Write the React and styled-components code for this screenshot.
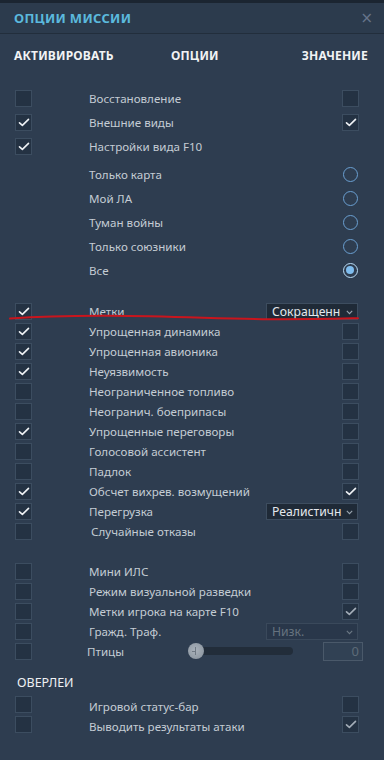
import React from 'react';
import styled, { createGlobalStyle } from 'styled-components';

const GlobalStyle = createGlobalStyle`
  html, body { margin: 0; padding: 0; background: #2e3d50; }
  body { font-family: "Noto Sans", "DejaVu Sans", sans-serif; }
  * { box-sizing: border-box; }
`;

const Window = styled.div`
  position: relative;
  width: 384px;
  height: 760px;
  background: #2e3d50;
  overflow: hidden;
`;

const TopStrip = styled.div`
  height: 3px;
  background: #1b2531;
`;

const TitleBar = styled.div`
  height: 31px;
  display: flex;
  align-items: center;
  justify-content: space-between;
  padding: 0 11px 0 14px;
  background: #2c3b4d;
  border-bottom: 1px solid #222e3c;
`;

const Title = styled.div`
  color: #5bb9dd;
  font-weight: 700;
  font-size: 13px;
  letter-spacing: 0.3px;
`;

const Close = styled.div`
  color: #66748a;
  font-size: 15px;
  line-height: 1;
  font-family: "DejaVu Sans", sans-serif;
`;

const HeaderRow = styled.div`
  display: grid;
  grid-template-columns: 157px 1fr auto;
  align-items: center;
  height: 43px;
  padding: 0 16px 0 14px;
  margin-bottom: 9px;
`;

const HeaderCell = styled.div`
  color: #f1f3f5;
  font-weight: 700;
  font-size: 12px;
  letter-spacing: 0.2px;
`;

const Section = styled.div`
  margin-top: ${p => p.$mt || 0}px;
`;

const Row = styled.div`
  display: grid;
  grid-template-columns: 74px 1fr auto;
  align-items: center;
  height: ${p => p.$h}px;
  padding: 0 25px 0 15px;
`;

const Label = styled.div`
  color: #c4ccd4;
  font-size: 11.6px;
  letter-spacing: 0;
  white-space: nowrap;
  margin-left: ${p => p.$shift || 0}px;
  padding-top: ${p => p.$drop || 0}px;
`;

const Box = styled.span`
  position: relative;
  display: flex;
  align-items: center;
  justify-content: center;
  width: 17px;
  height: 17px;
  background: #243243;
  border: 1px solid #3c4d60;
`;

const Check = ({ dim }) => (
  <svg width="12" height="9" viewBox="0 0 12 9">
    <path d="M1.5 4.8 L4.4 7.4 L10.5 1.4" fill="none" stroke={dim ? '#a3adb8' : '#eef1f4'} strokeWidth="1.6" strokeLinecap="round" strokeLinejoin="round" />
  </svg>
);

const CheckBox = ({ checked, dim }) => <Box>{checked && <Check dim={dim} />}</Box>;

const Radio = styled.span`
  position: relative;
  display: block;
  width: 15px;
  height: 15px;
  margin-right: 1px;
  border-radius: 50%;
  border: 1.4px solid ${p => (p.$on ? '#b9dcf6' : '#6a9fd1')};
  &::after {
    content: '';
    display: ${p => (p.$on ? 'block' : 'none')};
    position: absolute;
    left: 2px;
    top: 2px;
    width: 8.2px;
    height: 8.2px;
    border-radius: 50%;
    background: #7fbdee;
  }
`;

const Select = styled.div`
  position: relative;
  display: flex;
  align-items: center;
  width: 92px;
  height: 17px;
  margin-right: 1px;
  padding: 0 0 0 5px;
  background: ${p => (p.$disabled ? '#29374a' : '#1f2a37')};
  border: 1px solid ${p => (p.$disabled ? '#3a495b' : '#3d4d5f')};
  color: ${p => (p.$disabled ? '#66737f' : '#e4e8ec')};
  font-size: 12.2px;
  white-space: nowrap;
  overflow: hidden;
`;

const Chevron = styled.svg`
  position: absolute;
  right: 4px;
  top: 6px;
`;

const SelectBox = ({ text, disabled }) => (
  <Select $disabled={disabled}>
    {text}
    <Chevron width="7" height="5" viewBox="0 0 7 5">
      <path d="M0.8 0.8 L3.5 3.6 L6.2 0.8" fill="none" stroke={disabled ? '#6b7884' : '#9aa5b0'} strokeWidth="1.1" />
    </Chevron>
  </Select>
);

const SliderWrap = styled.div`
  display: flex;
  align-items: center;
  gap: 30px;
  margin-right: -4px;
`;

const Track = styled.div`
  position: relative;
  width: 104px;
  height: 8px;
  border-radius: 4px;
  background: #222d3a;
`;

const Thumb = styled.span`
  position: absolute;
  left: -1px;
  top: 50%;
  width: 16px;
  height: 16px;
  margin-top: -8px;
  border-radius: 50%;
  background: radial-gradient(circle at 45% 45%, #aab2bb 0%, #949ea8 60%, #838d97 100%);
  &::before {
    content: '';
    position: absolute;
    left: 7px;
    top: 4px;
    width: 1px;
    height: 8px;
    background: #6f7984;
  }
  &::after {
    content: '';
    position: absolute;
    left: 4px;
    top: 8px;
    width: 4px;
    height: 1px;
    background: #6f7984;
  }
`;

const NumberBox = styled.div`
  width: 40px;
  height: 19px;
  padding-right: 3px;
  text-align: right;
  line-height: 17px;
  font-size: 13px;
  color: #5d6b78;
  background: #314154;
  border: 1px solid #4a596a;
`;

const Slider = ({ value }) => (
  <SliderWrap>
    <Track><Thumb /></Track>
    <NumberBox>{value}</NumberBox>
  </SliderWrap>
);

const SubHeading = styled.div`
  color: #eef1f4;
  font-size: 12.5px;
  line-height: 16px;
  padding: 14px 0 0 17px;
  margin-bottom: 3px;
`;

const Annotation = styled.svg`
  position: absolute;
  left: 0;
  top: 0;
  pointer-events: none;
`;

const renderValue = v => {
  if (!v) return <span />;
  if (v.type === 'check') return <CheckBox checked={v.checked} dim={v.dim} />;
  if (v.type === 'radio') return <Radio $on={v.on} />;
  if (v.type === 'select') return <SelectBox text={v.text} disabled={v.disabled} />;
  if (v.type === 'slider') return <Slider value={v.value} />;
  return <span />;
};

const OptionRow = ({ h, item }) => (
  <Row $h={h}>
    {item.left === undefined ? <span /> : <CheckBox checked={item.left} />}
    <Label $shift={item.shift} $drop={item.drop}>{item.label}</Label>
    {renderValue(item.value)}
  </Row>
);

const off = { type: 'check', checked: false };
const on = { type: 'check', checked: true };

const views = [
  { label: 'Восстановление', left: false, value: off },
  { label: 'Внешние виды', left: true, value: on },
  { label: 'Настройки вида F10', left: true },
];

const mapModes = [
  { label: 'Только карта', value: { type: 'radio', on: false } },
  { label: 'Мой ЛА', value: { type: 'radio', on: false } },
  { label: 'Туман войны', value: { type: 'radio', on: false } },
  { label: 'Только союзники', value: { type: 'radio', on: false } },
  { label: 'Все', value: { type: 'radio', on: true } },
];

const sim = [
  { label: 'Метки', left: true, value: { type: 'select', text: 'Сокращенн' } },
  { label: 'Упрощенная динамика', left: true, value: off },
  { label: 'Упрощенная авионика', left: true, value: off },
  { label: 'Неуязвимость', left: true, value: off },
  { label: 'Неограниченное топливо', left: false, value: off },
  { label: 'Неогранич. боеприпасы', left: false, value: off },
  { label: 'Упрощенные переговоры', left: true, value: off },
  { label: 'Голосовой ассистент', left: false, value: off },
  { label: 'Падлок', left: false, value: off },
  { label: 'Обсчет вихрев. возмущений', left: true, value: on },
  { label: 'Перегрузка', left: true, value: { type: 'select', text: 'Реалистичн' } },
  { label: 'Случайные отказы', left: false, value: off, shift: 2 },
];

const world = [
  { label: 'Мини ИЛС', left: false, value: off },
  { label: 'Режим визуальной разведки', left: false, value: off },
  { label: 'Метки игрока на карте F10', left: false, value: { type: 'check', checked: true, dim: true } },
  { label: 'Гражд. Траф.', left: false, value: { type: 'select', text: 'Низк.', disabled: true } },
  { label: 'Птицы', left: false, value: { type: 'slider', value: 0 }, shift: -2 },
];

const overlays = [
  { label: 'Игровой статус-бар', left: false, value: off, drop: 5 },
  { label: 'Выводить результаты атаки', left: false, value: { type: 'check', checked: true, dim: true }, drop: 5 },
];

export default function App() {
  return (
    <>
      <GlobalStyle />
      <Window>
        <TopStrip />
        <TitleBar>
          <Title>ОПЦИИ МИССИИ</Title>
          <Close>×</Close>
        </TitleBar>
        <HeaderRow>
          <HeaderCell>АКТИВИРОВАТЬ</HeaderCell>
          <HeaderCell>ОПЦИИ</HeaderCell>
          <HeaderCell>ЗНАЧЕНИЕ</HeaderCell>
        </HeaderRow>
        <Section>
          {views.map(it => <OptionRow key={it.label} h={24} item={it} />)}
        </Section>
        <Section $mt={4}>
          {mapModes.map(it => <OptionRow key={it.label} h={24} item={it} />)}
        </Section>
        <Section $mt={19}>
          {sim.map(it => <OptionRow key={it.label} h={20} item={it} />)}
        </Section>
        <Section $mt={20}>
          {world.map(it => <OptionRow key={it.label} h={20} item={it} />)}
        </Section>
        <SubHeading>ОВЕРЛЕИ</SubHeading>
        <Section>
          {overlays.map(it => <OptionRow key={it.label} h={20} item={it} />)}
        </Section>
        <Annotation width="384" height="760" viewBox="0 0 384 760">
          <path d="M10 318.6 C 40 316.4, 70 315.6, 110 315.8 C 170 316.2, 220 318.6, 270 319.2 C 310 319.4, 340 318.6, 358 318.2" fill="none" stroke="#c9151d" strokeWidth="2" strokeLinecap="round" />
        </Annotation>
      </Window>
    </>
  );
}
